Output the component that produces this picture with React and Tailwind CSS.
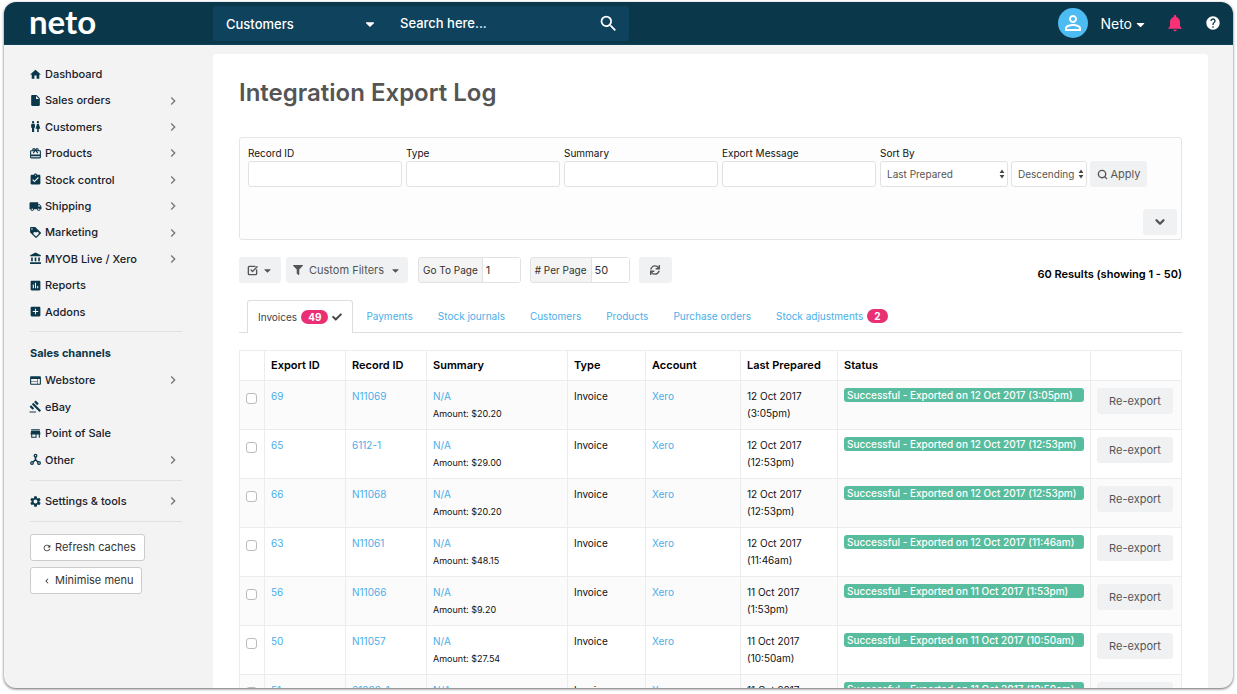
import React, { useState } from 'react';
import {
  MdHome,
  MdInsertDriveFile,
  MdWc,
  MdCardGiftcard,
  MdAssignmentTurnedIn,
  MdLocalShipping,
  MdLoyalty,
  MdAccountBalance,
  MdAssessment,
  MdAddBox,
  MdWeb,
  MdGavel,
  MdStore,
  MdSettings,
  MdRefresh,
  MdChevronLeft,
  MdChevronRight,
  MdSearch,
  MdPersonOutline,
  MdNotifications,
  MdHelp,
} from 'react-icons/md';
import { FaFilter, FaCaretDown, FaCheck, FaSync } from 'react-icons/fa';
import { SquareCheckBig, Search, ChevronDown } from 'lucide-react';

const ForkIcon = ({ size = 14 }) => (
  <svg width={size} height={size} viewBox="0 0 24 24" fill="none" stroke="currentColor" strokeWidth="2.4">
    <circle cx="12" cy="5" r="2.4" />
    <circle cx="5.5" cy="18.5" r="2.4" />
    <circle cx="18.5" cy="18.5" r="2.4" />
    <path d="M12 7.5V13M12 12.5L7 17M12 12.5L17 17" strokeWidth="2.8" />
  </svg>
);

const mainNav = [
  { label: 'Dashboard', icon: MdHome },
  { label: 'Sales orders', icon: MdInsertDriveFile, more: true },
  { label: 'Customers', icon: MdWc, more: true },
  { label: 'Products', icon: MdCardGiftcard, more: true },
  { label: 'Stock control', icon: MdAssignmentTurnedIn, more: true },
  { label: 'Shipping', icon: MdLocalShipping, more: true },
  { label: 'Marketing', icon: MdLoyalty, more: true },
  { label: 'MYOB Live / Xero', icon: MdAccountBalance, more: true },
  { label: 'Reports', icon: MdAssessment },
  { label: 'Addons', icon: MdAddBox },
];

const channelNav = [
  { label: 'Webstore', icon: MdWeb, more: true },
  { label: 'eBay', icon: MdGavel },
  { label: 'Point of Sale', icon: MdStore },
  { label: 'Other', icon: ForkIcon, more: true },
];

const tabs = [
  { label: 'Invoices', count: 49 },
  { label: 'Payments' },
  { label: 'Stock journals' },
  { label: 'Customers' },
  { label: 'Products' },
  { label: 'Purchase orders' },
  { label: 'Stock adjustments', count: 2 },
];

const rows = [
  { id: '69', record: 'N11069', amount: '$20.20', date: '12 Oct 2017', time: '(3:05pm)' },
  { id: '65', record: '6112-1', amount: '$29.00', date: '12 Oct 2017', time: '(12:53pm)' },
  { id: '66', record: 'N11068', amount: '$20.20', date: '12 Oct 2017', time: '(12:53pm)' },
  { id: '63', record: 'N11061', amount: '$48.15', date: '12 Oct 2017', time: '(11:46am)' },
  { id: '56', record: 'N11066', amount: '$9.20', date: '11 Oct 2017', time: '(1:53pm)' },
  { id: '50', record: 'N11057', amount: '$27.54', date: '11 Oct 2017', time: '(10:50am)' },
  { id: '51', record: '61030-1', amount: '$27.54', date: '11 Oct 2017', time: '(10:50am)' },
];

const NavItem = ({ item }) => {
  const Icon = item.icon;
  return (
    <li className="flex">
      <a href="#" className="flex flex-1 items-center text-[11px] font-medium text-[#16212b]">
        <span className="w-4 text-[#0a374a]">
          <Icon size={13} />
        </span>
        <span className="flex-1">{item.label}</span>
        {item.more && <MdChevronRight size={16} className="mr-px text-[#777]" />}
      </a>
    </li>
  );
};

const Badge = ({ children }) => (
  <span className="rounded-full bg-[#ea2f74] px-[7px] text-[10px] leading-[14px] font-bold text-white">{children}</span>
);

const SortSelect = ({ id, label, value, className }) => (
  <div className={`relative ${className}`}>
    <select
      id={id}
      aria-label={label}
      defaultValue={value}
      className="block h-[26px] w-full appearance-none rounded-[3px] border border-[#e2e2e2] bg-white pl-1.5 text-[10px] text-[#555]"
    >
      <option>{value}</option>
    </select>
    <svg className="pointer-events-none absolute top-2 right-[3px]" width="6" height="10" viewBox="0 0 6 10" fill="#444">
      <path d="M3 0.5L5.4 4H0.6zM3 9.5L0.6 6h4.8z" />
    </svg>
  </div>
);

const TopBar = () => (
  <header className="flex h-[43px] items-center border-b border-[#0e425d] bg-[#0a374a] text-white">
    <a href="#" className="w-[209px] pb-1 pl-[25px] font-['Lato',sans-serif] text-[33px] leading-9 font-bold">
      neto
    </a>
    <div className="flex h-[35px] w-[416px] items-center rounded-[3px] bg-[#0e425d] text-sm">
      <button className="flex w-[187px] items-center justify-between pt-0.5 pr-[23px] pl-[13px] text-[13px] font-medium">
        Customers
        <FaCaretDown size={14} />
      </button>
      <input
        type="text"
        aria-label="Search"
        placeholder="Search here..."
        className="min-w-0 flex-1 bg-transparent text-[13px] font-medium placeholder:text-white focus:outline-none"
      />
      <button aria-label="Search" className="px-2.5">
        <MdSearch size={21} />
      </button>
    </div>
    <div className="ml-auto flex items-center pr-3">
      <span className="flex size-[30px] items-center justify-center rounded-full bg-[#4dbcf3]">
        <MdPersonOutline size={24} />
      </span>
      <button className="ml-3 flex items-center gap-0.5 pt-0.5 text-sm">
        Neto
        <FaCaretDown size={13} />
      </button>
      <button aria-label="Notifications" className="ml-[18px] text-[#fb3075]">
        <MdNotifications size={20} />
      </button>
      <button aria-label="Help" className="ml-5">
        <MdHelp size={16} />
      </button>
    </div>
  </header>
);

const Sidebar = () => (
  <aside className="w-[209px] shrink-0 pt-4 pr-[31px] pl-[25px]">
    <nav>
      <ul className="grid h-[264px] auto-rows-fr">
        {mainNav.map((item) => (
          <NavItem key={item.label} item={item} />
        ))}
      </ul>
      <hr className="mt-1.5 ml-px border-[#dfe0e0]" />
      <h2 className="mt-2 ml-px text-[11px] leading-[27px] font-bold text-[#0a374a]">Sales channels</h2>
      <ul className="grid h-[106px] auto-rows-fr">
        {channelNav.map((item) => (
          <NavItem key={item.label} item={item} />
        ))}
      </ul>
      <hr className="mt-[7px] ml-px border-[#dfe0e0]" />
      <ul className="my-[7px] grid h-[26px]">
        <NavItem item={{ label: 'Settings & tools', icon: MdSettings, more: true }} />
      </ul>
      <hr className="ml-px border-[#dfe0e0]" />
    </nav>
    <div className="mt-3 ml-px flex flex-col items-start gap-1.5">
      <button className="flex h-[27px] items-center gap-[3px] rounded-[3px] border border-[#ccc] bg-white pr-2 pl-[11px] text-[11px] text-[#333]">
        <MdRefresh size={10} />
        Refresh caches
      </button>
      <button className="flex h-[27px] items-center gap-[3px] rounded-[3px] border border-[#ccc] bg-white pr-2 pl-[11px] text-[11px] text-[#333]">
        <MdChevronLeft size={10} />
        Minimise menu
      </button>
    </div>
  </aside>
);

const FilterPanel = () => (
  <section className="rounded-[3px] border border-[#e5e5e5] bg-[#fdfdfd]">
    <div className="flex items-end gap-1 pt-2 pr-[34px] pl-2">
      {['Record ID', 'Type', 'Summary', 'Export Message'].map((label) => (
        <label key={label} className="min-w-0 flex-1 text-[10px] leading-[15px] text-[#111]">
          {label}
          <input type="text" className="block h-[26px] w-full rounded-[3px] border border-[#e2e2e2] bg-white px-2" />
        </label>
      ))}
      <div className="flex items-end gap-[3px]">
        <div>
          <label htmlFor="sort-by" className="block text-[10px] leading-[15px] text-[#111]">
            Sort By
          </label>
          <SortSelect id="sort-by" value="Last Prepared" className="w-32" />
        </div>
        <SortSelect id="sort-dir" label="Sort direction" value="Descending" className="w-[76px]" />
        <button className="flex h-[26px] w-[57px] items-center justify-center gap-[3px] rounded-[3px] bg-[#eff1f3] text-[11px] text-[#555]">
          <Search size={11} strokeWidth={3} />
          Apply
        </button>
      </div>
    </div>
    <div className="mt-[22px] flex justify-end pr-1 pb-1">
      <button
        aria-label="More filters"
        className="flex h-[26px] w-[34px] items-center justify-center rounded-[3px] bg-[#eff1f3] text-[#555]"
      >
        <ChevronDown size={14} strokeWidth={4} />
      </button>
    </div>
  </section>
);

const PageField = ({ label, value }) => (
  <label className="flex h-[26px] items-center rounded-[3px] border border-[#e2e2e2] bg-[#f4f4f4] text-[10px] text-[#333]">
    <span className="px-1">{label}</span>
    <input
      type="text"
      defaultValue={value}
      className="h-6 w-[38px] border-l border-[#e2e2e2] bg-white px-[3px] text-[11px]"
    />
  </label>
);

const Toolbar = () => (
  <div className="mt-[17px] flex items-center text-[#555]">
    <button
      aria-label="Select rows"
      className="flex h-[26px] w-[42px] items-center justify-between rounded-[3px] bg-[#eff1f3] px-2"
    >
      <SquareCheckBig size={11} strokeWidth={3} />
      <FaCaretDown size={11} />
    </button>
    <button className="ml-[5px] flex h-[26px] w-[122px] items-center justify-between rounded-[3px] bg-[#eff1f3] px-[7px] text-[11px]">
      <FaFilter size={10} />
      Custom Filters
      <FaCaretDown size={11} />
    </button>
    <div className="ml-2.5 flex gap-[9px]">
      <PageField label="Go To Page" value="1" />
      <PageField label="# Per Page" value="50" />
      <button
        aria-label="Reload"
        className="flex h-[26px] w-[33px] items-center justify-center rounded-[3px] bg-[#eff1f3]"
      >
        <FaSync size={10} />
      </button>
    </div>
    <p className="ml-auto pt-2 text-[11px] font-semibold text-black">60 Results (showing 1 - 50)</p>
  </div>
);

const Tabs = () => {
  const [active, setActive] = useState('Invoices');
  return (
    <div role="tablist" className="mt-[17px] flex gap-px border-b border-[#ddd] pl-2 text-[10px]">
      {tabs.map((tab) => (
        <button
          key={tab.label}
          role="tab"
          aria-selected={active === tab.label}
          onClick={() => setActive(tab.label)}
          className={
            active === tab.label
              ? '-mb-px flex h-[33px] items-center gap-1 rounded-t-[3px] border border-b-0 border-[#ddd] bg-white px-2.5 text-[#444]'
              : 'flex h-8 items-center gap-1 px-3 text-[#4aaee8]'
          }
        >
          {tab.label}
          {tab.count && <Badge>{tab.count}</Badge>}
          {active === tab.label && <FaCheck size={10} />}
        </button>
      ))}
    </div>
  );
};

const LogTable = () => (
  <table className="mt-[17px] w-full table-fixed border-collapse text-left text-[10px] leading-[17px] text-[#111]">
    <colgroup>
      <col className="w-[25px]" />
      <col className="w-[81px]" />
      <col className="w-[81px]" />
      <col className="w-[141px]" />
      <col className="w-[78px]" />
      <col className="w-[95px]" />
      <col className="w-[97px]" />
      <col />
      <col className="w-[91px]" />
    </colgroup>
    <thead>
      <tr className="h-[30px] text-[11px] text-black">
        {['', 'Export ID', 'Record ID', 'Summary', 'Type', 'Account', 'Last Prepared', 'Status', ''].map((head, i) => (
          <th key={i} className="border border-[#ececec] px-1.5 font-semibold">
            {head}
          </th>
        ))}
      </tr>
    </thead>
    <tbody>
      {rows.map((row) => (
        <tr key={row.id} className="h-[49px] align-top odd:bg-[#fbfbfb] [&>td]:border [&>td]:border-[#ececec] [&>td]:px-1.5 [&>td]:pt-[7px]">
          <td>
            <input
              type="checkbox"
              aria-label={`Select export ${row.id}`}
              className="mt-[5px] block size-[11px] appearance-none rounded-[3px] border border-[#bbb] bg-white checked:bg-[#4aaee8]"
            />
          </td>
          <td>
            <a href="#" className="text-[#4aaee8]">{row.id}</a>
          </td>
          <td>
            <a href="#" className="text-[#4aaee8]">{row.record}</a>
          </td>
          <td>
            <a href="#" className="text-[#4aaee8]">N/A</a>
            <div className="text-[9px]">Amount: {row.amount}</div>
          </td>
          <td>Invoice</td>
          <td>
            <a href="#" className="text-[#4aaee8]">Xero</a>
          </td>
          <td>
            {row.date}
            <br />
            {row.time}
          </td>
          <td>
            <div className="rounded-[3px] bg-[#57bd9e] px-[3px] text-[10px] leading-[14px] font-medium whitespace-nowrap text-white">
              Successful - Exported on {row.date} {row.time}
            </div>
          </td>
          <td>
            <button className="h-[26px] w-[76px] rounded-[3px] bg-[#eff1f3] text-[11px] text-[#555]">Re-export</button>
          </td>
        </tr>
      ))}
    </tbody>
  </table>
);

const App = () => {
  return (
    <div className="h-screen bg-white px-1 pt-0.5 pb-1.5 font-['Inter',sans-serif]">
      <div className="flex h-full flex-col overflow-hidden rounded-xl bg-[#f3f3f3] shadow-[0_1px_3px_rgba(0,0,0,0.6)]">
        <TopBar />
        <div className="flex min-h-0 flex-1">
          <Sidebar />
          <main className="mt-[9px] mr-[25px] min-w-0 flex-1 overflow-hidden rounded-t-[3px] bg-white px-[26px]">
            <h1 className="pt-5 pb-[25px] text-2xl leading-[38px] font-semibold text-[#555]">
              Integration Export Log
            </h1>
            <FilterPanel />
            <Toolbar />
            <Tabs />
            <LogTable />
          </main>
        </div>
      </div>
    </div>
  );
};

export default App;
